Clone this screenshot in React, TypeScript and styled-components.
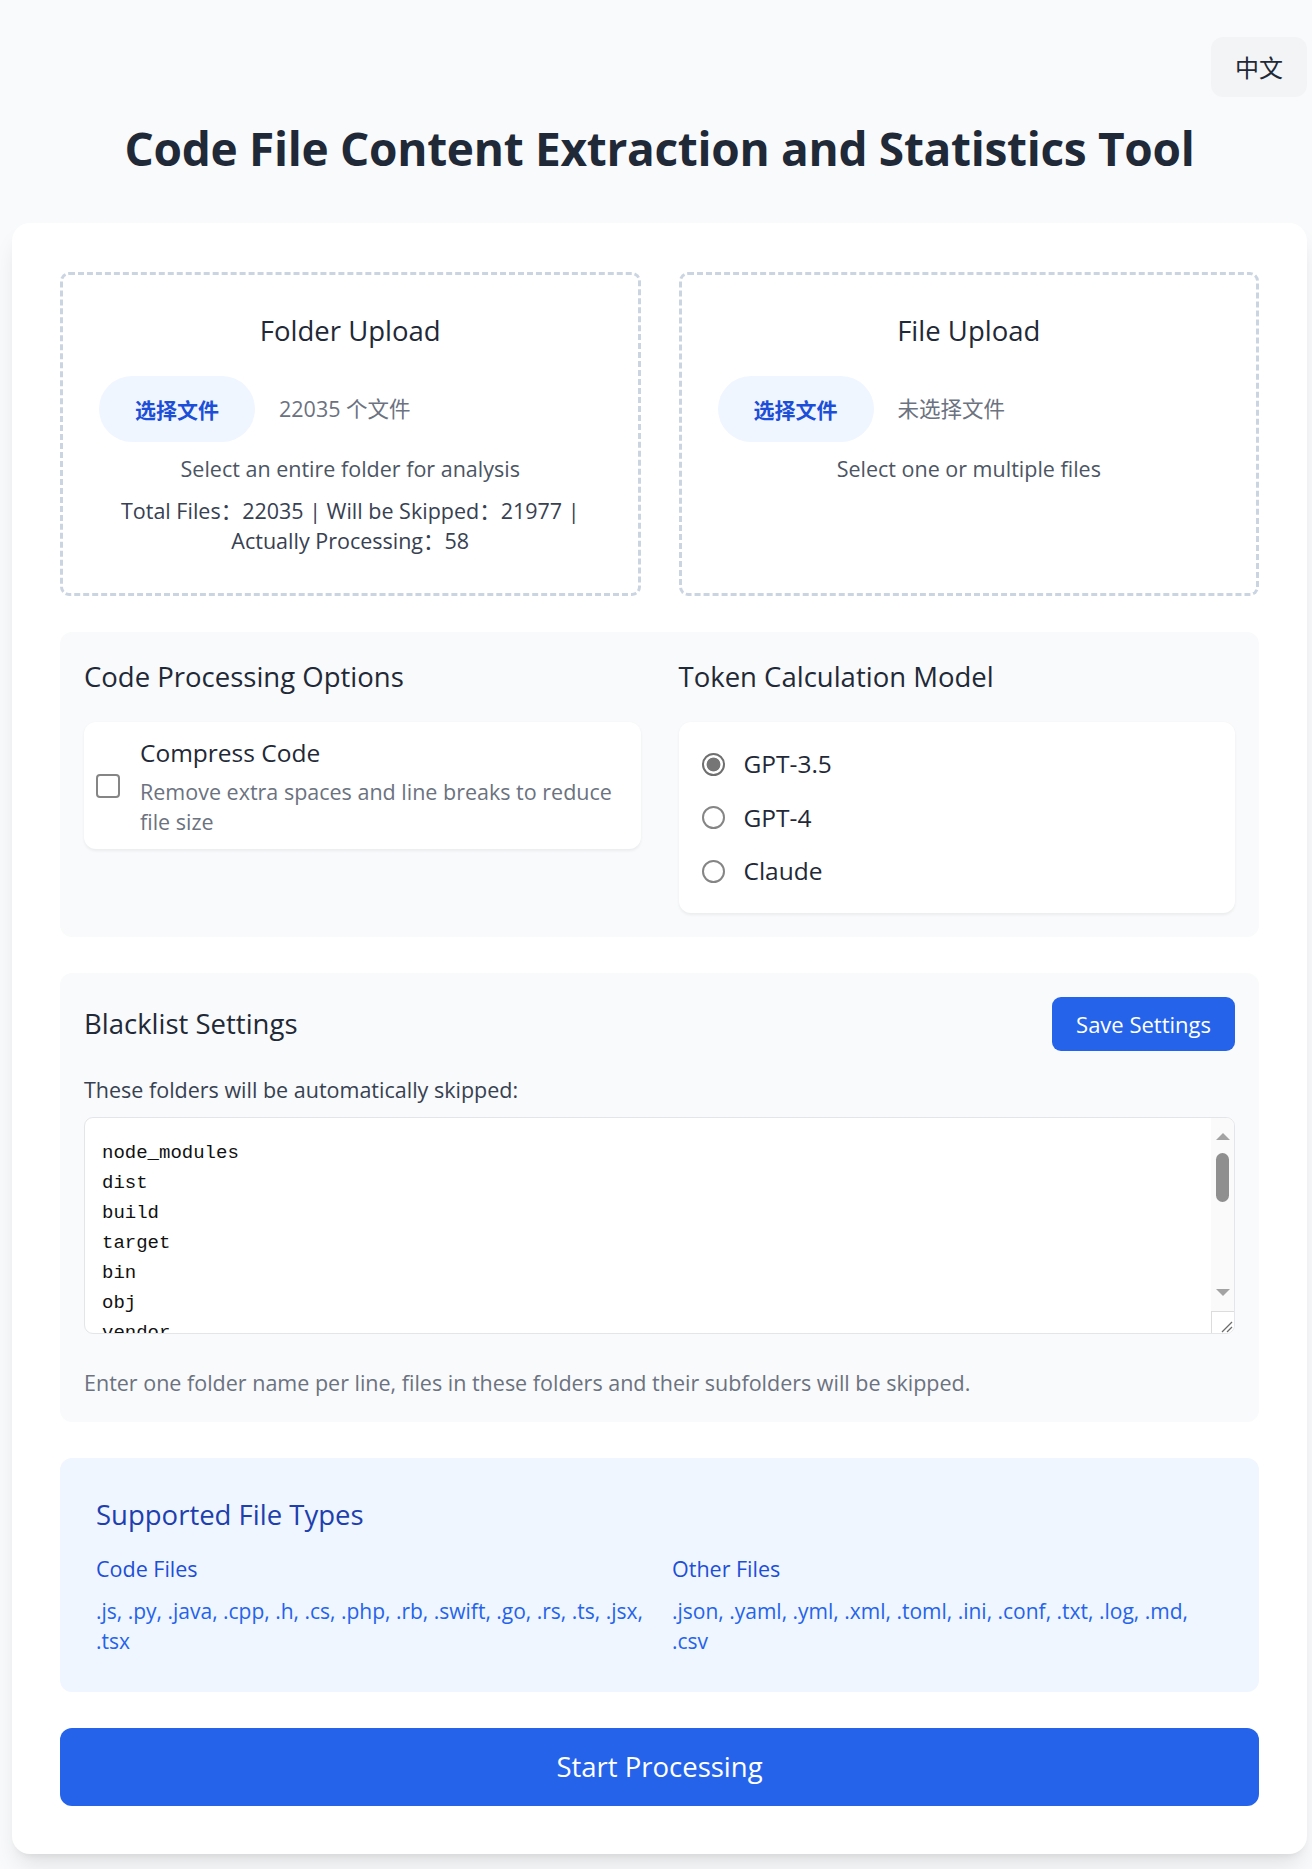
import React from "react";
import styled, { createGlobalStyle } from "styled-components";

const GlobalStyle = createGlobalStyle`
  html, body {
    margin: 0;
    padding: 0;
    background: #f9fafb;
  }
  body {
    font-family: "Open Sans", "Noto Sans CJK SC", sans-serif;
    color: #1f2937;
  }
  * { box-sizing: border-box; }
`;

const SANS = `"Open Sans", "Noto Sans CJK SC", sans-serif`;
const CJK = `"Noto Sans CJK SC", "Open Sans", sans-serif`;

const Page = styled.div`
  display: flex;
  flex-direction: column;
  padding: 37px 5px 15px 12px;
`;

const TopBar = styled.div`
  display: flex;
  justify-content: flex-end;
`;

const LangButton = styled.button`
  height: 60px;
  padding: 0 24px;
  border: none;
  border-radius: 12px;
  background: #f3f4f6;
  font-family: ${CJK};
  font-size: 24px;
  line-height: 36px;
  color: #1f2937;
  cursor: pointer;
`;

const Title = styled.h1`
  margin: 24px 0 47px;
  text-align: center;
  font-family: ${SANS};
  font-size: 46px;
  line-height: 55px;
  font-weight: 700;
  letter-spacing: -0.3px;
  color: #1f2937;
`;

const Card = styled.main`
  display: flex;
  flex-direction: column;
  gap: 36px;
  padding: 49px 48px 48px;
  background: #ffffff;
  border-radius: 18px;
  box-shadow: 0 15px 23px -5px rgba(0, 0, 0, 0.1), 0 6px 9px -6px rgba(0, 0, 0, 0.1);
`;

const UploadGrid = styled.div`
  display: grid;
  grid-template-columns: 1fr 1fr;
  gap: 38px;
`;

const UploadBox = styled.div`
  border: 3px dashed #cbd5e1;
  border-radius: 9px;
  padding: 35px 36px 37px;
  text-align: center;
`;

const BoxTitle = styled.h3`
  margin: 0 0 24px;
  font-size: 27.5px;
  line-height: 42px;
  font-weight: 400;
  color: #1f2937;
`;

const FileRow = styled.div`
  display: flex;
  align-items: center;
`;

const PickButton = styled.button`
  height: 66px;
  padding: 0 36px;
  margin-right: 24px;
  border: none;
  border-radius: 9999px;
  background: #eff6ff;
  color: #1d4ed8;
  font-family: ${CJK};
  font-weight: 700;
  font-size: 21px;
  line-height: 30px;
  cursor: pointer;
`;

const FileStatus = styled.span`
  font-family: ${SANS};
  font-size: 21.5px;
  line-height: 30px;
  color: #6b7280;
`;

const BoxText = styled.p<{ $strong?: boolean }>`
  margin: 12px 0 0;
  font-size: 21.5px;
  line-height: 30px;
  color: ${(p) => (p.$strong ? "#374151" : "#4b5563")};
`;

const Panel = styled.section<{ $tint?: boolean }>`
  background: ${(p) => (p.$tint ? "#eff6ff" : "#f9fafb")};
  border-radius: 12px;
  padding: ${(p) => (p.$tint ? "36px" : "24px")};
`;

const OptionsGrid = styled.div`
  display: grid;
  grid-template-columns: 1fr 1fr;
  gap: 38px;
  align-items: start;
`;

const SectionHeading = styled.h3<{ $blue?: boolean }>`
  margin: 0 0 ${(p) => (p.$blue ? "18px" : "24px")};
  font-size: 27.5px;
  line-height: 42px;
  font-weight: 400;
  color: ${(p) => (p.$blue ? "#1e40af" : "#1f2937")};
`;

const OptionCard = styled.div<{ $list?: boolean }>`
  display: flex;
  flex-direction: ${(p) => (p.$list ? "column" : "row")};
  align-items: ${(p) => (p.$list ? "stretch" : "center")};
  gap: ${(p) => (p.$list ? "17.5px" : "20px")};
  padding: ${(p) => (p.$list ? "24px 24px 24px 23px" : "12px")};
  background: #ffffff;
  border-radius: 12px;
  box-shadow: 0 1.5px 3px rgba(0, 0, 0, 0.06);
`;

const Checkbox = styled.input`
  appearance: none;
  flex-shrink: 0;
  width: 24px;
  height: 24px;
  margin: 0;
  border: 2px solid #858585;
  border-radius: 4px;
  background: #ffffff;
`;

const OptionText = styled.div`
  display: flex;
  flex-direction: column;
  gap: 6px;
`;

const OptionName = styled.span`
  font-size: 24.5px;
  line-height: 37px;
  color: #1f2937;
`;

const OptionDesc = styled.span`
  font-size: 21.5px;
  line-height: 30px;
  color: #6b7280;
`;

const RadioRow = styled.label`
  display: flex;
  align-items: center;
  gap: 19px;
  height: 36px;
  font-size: 24.5px;
  line-height: 36px;
  color: #1f2937;
`;

const Radio = styled.input`
  appearance: none;
  flex-shrink: 0;
  width: 23px;
  height: 23px;
  margin: 0;
  border: 2px solid #858585;
  border-radius: 50%;
  background: #ffffff;
  &:checked {
    border-color: #6f6f6f;
    background: radial-gradient(circle at center, #767676 0 6.5px, #ffffff 7.3px);
  }
`;

const HeaderRow = styled.div`
  display: flex;
  align-items: center;
  justify-content: space-between;
  margin-bottom: 24px;
  h3 {
    margin: 0;
  }
`;

const SaveButton = styled.button`
  padding: 12px 24px;
  border: none;
  border-radius: 9px;
  background: #2563eb;
  color: #ffffff;
  font-family: ${SANS};
  font-size: 22px;
  line-height: 30px;
  cursor: pointer;
`;

const FieldLabel = styled.p`
  margin: 0 0 12px;
  font-size: 21.5px;
  line-height: 30px;
  color: #374151;
`;

const EditorFrame = styled.div`
  display: flex;
  height: 217px;
  border: 1px solid #e3e5e9;
  border-radius: 9px;
  overflow: hidden;
  background: #ffffff;
`;

const BlacklistArea = styled.textarea`
  flex: 1;
  min-width: 0;
  margin: 0;
  padding: 20px 17px 0;
  border: none;
  outline: none;
  resize: none;
  overflow: hidden;
  background: transparent;
  font-family: "Liberation Mono", "DejaVu Sans Mono", monospace;
  font-size: 19px;
  line-height: 30px;
  color: #111111;
`;

const ScrollColumn = styled.div`
  display: flex;
  flex-direction: column;
  width: 23px;
  flex-shrink: 0;
  background: #fafafa;
`;

const ArrowCell = styled.div<{ $down?: boolean }>`
  display: flex;
  justify-content: center;
  height: ${(p) => (p.$down ? "26px" : "27px")};
  padding-top: ${(p) => (p.$down ? "4px" : "15px")};
`;

const Triangle = styled.span<{ $down?: boolean }>`
  width: 0;
  height: 0;
  border-left: 7.5px solid transparent;
  border-right: 7.5px solid transparent;
  ${(p) =>
    p.$down
      ? "border-top: 7.5px solid #a3a3a3;"
      : "border-bottom: 7.5px solid #a3a3a3;"}
`;

const Track = styled.div`
  flex: 1;
  display: flex;
  justify-content: center;
  padding-top: 8px;
`;

const Thumb = styled.div`
  width: 13px;
  height: 49px;
  border-radius: 7px;
  background: #8f8f8f;
`;

const Corner = styled.div`
  display: flex;
  align-items: flex-end;
  justify-content: flex-end;
  height: 22px;
  border-top: 1px solid #dcdcdc;
  border-left: 1px solid #dcdcdc;
  background: #ffffff;
`;

const HelpText = styled.p`
  margin: 34px 0 0;
  font-size: 21.5px;
  line-height: 30px;
  color: #6b7280;
`;

const TypesGrid = styled.div`
  display: grid;
  grid-template-columns: 1fr 1fr;
  gap: 25px;
`;

const TypeLabel = styled.h4`
  margin: 0 0 12px;
  font-size: 21.5px;
  line-height: 30px;
  font-weight: 400;
  color: #1d4ed8;
`;

const TypeList = styled.p`
  margin: 0;
  font-size: 21px;
  line-height: 30px;
  color: #2563eb;
`;

const StartButton = styled.button`
  width: 100%;
  padding: 18px;
  border: none;
  border-radius: 12px;
  background: #2563eb;
  color: #ffffff;
  font-family: ${SANS};
  font-size: 27.5px;
  line-height: 42px;
  cursor: pointer;
`;

const blacklist = [
  "node_modules",
  "dist",
  "build",
  "target",
  "bin",
  "obj",
  "vendor",
  ".git",
  ".idea",
  ".vscode",
  "__pycache__",
  "coverage",
].join("\n");

const models = ["GPT-3.5", "GPT-4", "Claude"];

export default function App() {
  return (
    <>
      <GlobalStyle />
      <Page>
        <TopBar>
          <LangButton>中文</LangButton>
        </TopBar>
        <Title>Code File Content Extraction and Statistics Tool</Title>
        <Card>
          <UploadGrid>
            <UploadBox>
              <BoxTitle>Folder Upload</BoxTitle>
              <FileRow>
                <PickButton>选择文件</PickButton>
                <FileStatus>22035 个文件</FileStatus>
              </FileRow>
              <BoxText>Select an entire folder for analysis</BoxText>
              <BoxText $strong>
                Total Files：22035 | Will be Skipped：21977 | Actually Processing：58
              </BoxText>
            </UploadBox>
            <UploadBox>
              <BoxTitle>File Upload</BoxTitle>
              <FileRow>
                <PickButton>选择文件</PickButton>
                <FileStatus>未选择文件</FileStatus>
              </FileRow>
              <BoxText>Select one or multiple files</BoxText>
            </UploadBox>
          </UploadGrid>

          <Panel>
            <OptionsGrid>
              <div>
                <SectionHeading>Code Processing Options</SectionHeading>
                <OptionCard>
                  <Checkbox type="checkbox" />
                  <OptionText>
                    <OptionName>Compress Code</OptionName>
                    <OptionDesc>
                      Remove extra spaces and line breaks to reduce file size
                    </OptionDesc>
                  </OptionText>
                </OptionCard>
              </div>
              <div>
                <SectionHeading>Token Calculation Model</SectionHeading>
                <OptionCard $list>
                  {models.map((m, i) => (
                    <RadioRow key={m}>
                      <Radio type="radio" name="model" defaultChecked={i === 0} />
                      {m}
                    </RadioRow>
                  ))}
                </OptionCard>
              </div>
            </OptionsGrid>
          </Panel>

          <Panel>
            <HeaderRow>
              <SectionHeading>Blacklist Settings</SectionHeading>
              <SaveButton>Save Settings</SaveButton>
            </HeaderRow>
            <FieldLabel>These folders will be automatically skipped:</FieldLabel>
            <EditorFrame>
              <BlacklistArea defaultValue={blacklist} spellCheck={false} />
              <ScrollColumn>
                <ArrowCell>
                  <Triangle />
                </ArrowCell>
                <Track>
                  <Thumb />
                </Track>
                <ArrowCell $down>
                  <Triangle $down />
                </ArrowCell>
                <Corner>
                  <svg width="14" height="14" viewBox="0 0 14 14">
                    <line x1="2" y1="13" x2="12" y2="3" stroke="#6b6b6b" strokeWidth="1.2" />
                    <line x1="7" y1="13" x2="12" y2="8" stroke="#6b6b6b" strokeWidth="1.2" />
                  </svg>
                </Corner>
              </ScrollColumn>
            </EditorFrame>
            <HelpText>
              Enter one folder name per line, files in these folders and their subfolders will be skipped.
            </HelpText>
          </Panel>

          <Panel $tint>
            <SectionHeading $blue>Supported File Types</SectionHeading>
            <TypesGrid>
              <div>
                <TypeLabel>Code Files</TypeLabel>
                <TypeList>
                  .js, .py, .java, .cpp, .h, .cs, .php, .rb, .swift, .go, .rs, .ts, .jsx, .tsx
                </TypeList>
              </div>
              <div>
                <TypeLabel>Other Files</TypeLabel>
                <TypeList>
                  .json, .yaml, .yml, .xml, .toml, .ini, .conf, .txt, .log, .md, .csv
                </TypeList>
              </div>
            </TypesGrid>
          </Panel>

          <StartButton>Start Processing</StartButton>
        </Card>
      </Page>
    </>
  );
}
